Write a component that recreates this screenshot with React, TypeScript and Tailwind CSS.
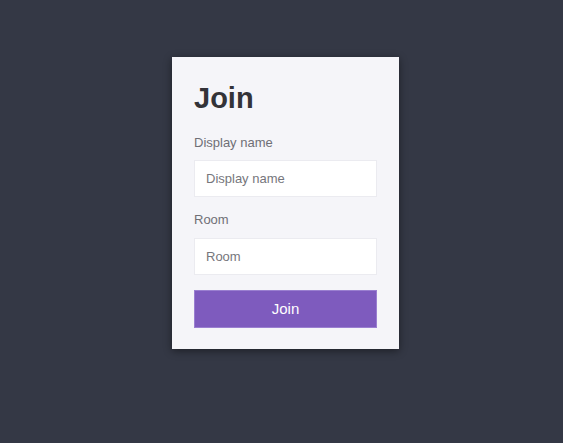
export default function App() {
  return (
    <div
      className="min-h-[443px] w-full bg-[#343845] flex justify-center items-start pl-[8px] pt-[57px]"
      style={{ fontFamily: '"Liberation Sans", Arial, sans-serif' }}
    >
      <form
        className="w-[227px] bg-[#f5f5f9] px-[22px] pt-[23px] pb-[21px] flex flex-col shadow-[0_2px_8px_rgba(0,0,0,0.45)]"
        onSubmit={(e) => e.preventDefault()}
      >
        <h1 className="text-[29px] leading-[36px] font-bold text-[#333338]">Join</h1>
        <label className="mt-[19px] text-[13px] leading-[16px] text-[#6f6f76]">Display name</label>
        <input
          className="mt-[9px] h-[37px] w-full bg-white border border-[#ebebf0] px-[11px] text-[13px] text-[#333] placeholder:text-[#76767c] outline-none"
          placeholder="Display name"
        />
        <label className="mt-[15px] text-[13px] leading-[16px] text-[#6f6f76]">Room</label>
        <input
          className="mt-[10px] h-[37px] w-full bg-white border border-[#ebebf0] px-[11px] text-[13px] text-[#333] placeholder:text-[#76767c] outline-none"
          placeholder="Room"
        />
        <button
          type="submit"
          className="mt-[15px] h-[38px] w-full bg-[#7e5bbe] border border-[#9a7fd0] text-white text-[15px]"
        >
          Join
        </button>
      </form>
    </div>
  )
}
